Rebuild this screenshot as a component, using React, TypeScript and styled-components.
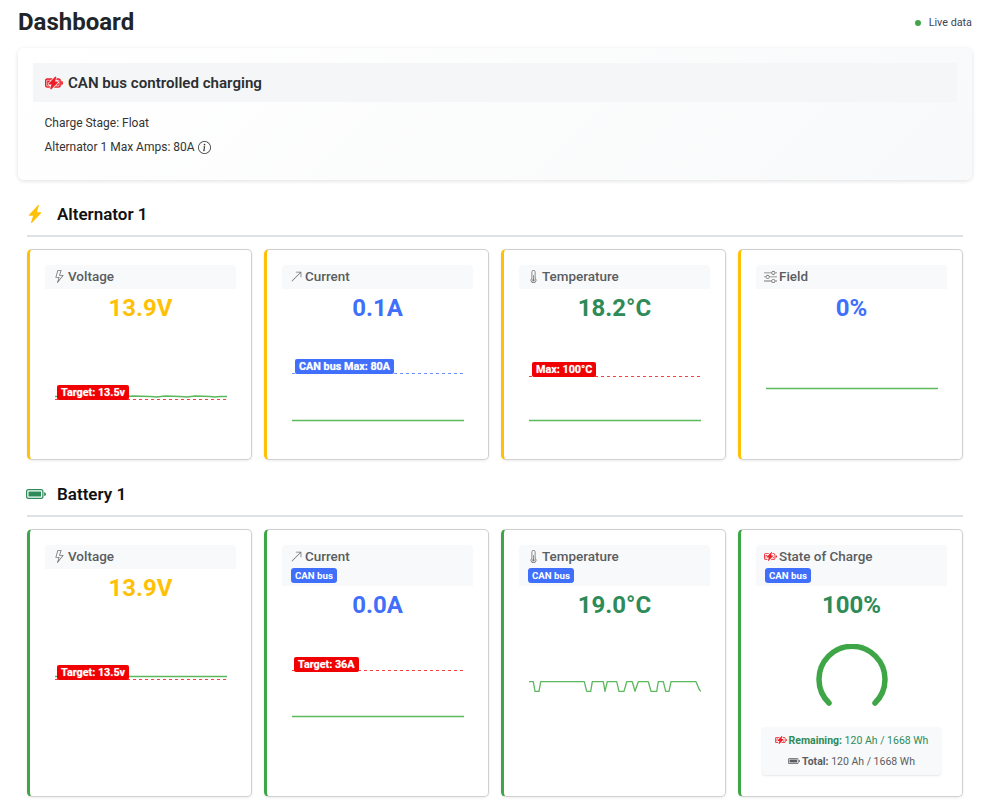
import type { ReactNode } from 'react';
import styled, { createGlobalStyle } from 'styled-components';
import {
  BsArrowUpRight,
  BsBatteryCharging,
  BsBatteryFull,
  BsInfoCircle,
  BsLightning,
  BsLightningChargeFill,
  BsSliders,
  BsThermometerHalf,
} from 'react-icons/bs';

const YELLOW = '#ffc107';
const BLUE = '#3f6ffb';
const SEA = '#2e8b57';
const GREEN = '#3fa648';
const RED = '#f00000';
const DANGER = '#ee1c25';
const LINE = '#5cb85c';

const GlobalStyle = createGlobalStyle`
  html, body {
    margin: 0;
    padding: 0;
    background: #fff;
    font-family: Roboto, "Liberation Sans", sans-serif;
    color: #212529;
  }
`;

const Page = styled.div`
  width: 988px;
  box-sizing: border-box;
  padding: 0 16px 5px 18px;
`;

const TopBar = styled.div`
  display: flex;
  align-items: center;
  justify-content: space-between;
  height: 44px;
  margin-bottom: 4px;
`;

const PageTitle = styled.h1`
  margin: 0;
  font-size: 24px;
  font-weight: 700;
  color: #212529;
`;

const LiveData = styled.div`
  display: flex;
  align-items: center;
  gap: 8px;
  font-size: 10.8px;
  color: #3b4458;
`;

const LiveDot = styled.span`
  width: 6px;
  height: 6px;
  margin-top: 1px;
  border-radius: 50%;
  background: ${GREEN};
`;

const Banner = styled.section`
  height: 132px;
  box-sizing: border-box;
  padding: 15px;
  border-radius: 6px;
  background: linear-gradient(135deg, #ffffff, #f8f9fa);
  box-shadow: 0 1px 4px rgba(0, 0, 0, 0.13);
`;

const BannerHead = styled.div`
  display: flex;
  align-items: center;
  gap: 5px;
  height: 39px;
  padding-left: 12px;
  background: #f5f6f7;
  font-size: 15.1px;
  font-weight: 600;
  color: #2b2f33;
`;

const BannerBody = styled.div`
  padding: 9px 0 0 11.5px;
  font-size: 12px;
  line-height: 24px;
  color: #333;

  svg {
    vertical-align: -2.5px;
    margin-left: 3px;
  }
`;

const Section = styled.section`
  padding: 0 9px;
`;

const SectionHead = styled.div`
  display: flex;
  align-items: center;
  height: 36px;
  padding: 1px 0 3px;
  margin-top: 15px;
  margin-bottom: 12px;
  border-bottom: 2px solid #dee2e6;
  font-size: 17px;
  font-weight: 600;
  color: #111;
`;

const SectionIcon = styled.span<{ $color: string; $size: number }>`
  display: flex;
  width: 30px;
  margin-left: -1px;
  margin-right: 1px;
  font-size: ${(p) => p.$size}px;
  color: ${(p) => p.$color};
`;

const CardGrid = styled.div`
  display: grid;
  grid-template-columns: repeat(4, 225px);
  gap: 12px;
`;

const Card = styled.article<{ $accent: string }>`
  box-sizing: border-box;
  padding: 15px;
  background: #fff;
  border: 1px solid #d0d0d0;
  border-left: 3px solid ${(p) => p.$accent};
  border-radius: 5px;
  box-shadow: 0 1px 3px rgba(0, 0, 0, 0.08);
`;

const CardTitle = styled.div`
  box-sizing: border-box;
  min-height: 24px;
  padding: 0 8px;
  background: #f8f9fa;
  border-radius: 4px 4px 0 0;
  font-size: 13.45px;
  font-weight: 500;
  color: #5a5d61;
`;

const TitleRow = styled.div`
  display: flex;
  align-items: center;
  gap: 2px;
  height: 23px;
`;

const TitleIcon = styled.span<{ $color?: string }>`
  display: flex;
  flex: none;
  color: ${(p) => p.$color ?? '#777'};
`;

const CanBadge = styled.span`
  display: block;
  width: fit-content;
  margin-left: 1px;
  padding: 0 4px;
  height: 15px;
  line-height: 15px;
  border-radius: 3px;
  background: ${BLUE};
  color: #fff;
  font-size: 9.7px;
  font-weight: 700;
`;

const CanBadgeSpacer = styled.div`
  height: 3px;
`;

const Value = styled.div<{ $color: string }>`
  height: 36px;
  line-height: 38px;
  text-align: center;
  font-size: 24px;
  font-weight: 700;
  color: ${(p) => p.$color};
`;

const ChartBox = styled.div`
  position: relative;
  height: 119px;

  svg {
    display: block;
  }
`;

const ChartLabel = styled.span<{ $bg: string }>`
  position: absolute;
  height: 15px;
  line-height: 15px;
  padding: 0 4px;
  border-radius: 2px;
  background: ${(p) => p.$bg};
  color: #fff;
  font-size: 10.8px;
  font-weight: 700;
  white-space: nowrap;
  text-shadow: 0 0 1px rgba(255, 255, 255, 0.6);
`;

const GaugeBox = styled.div`
  display: flex;
  justify-content: center;
  height: 105px;
  padding-top: 22px;
  box-sizing: border-box;

  svg {
    display: block;
  }
`;

const InfoBox = styled.div`
  margin: 0 6px 6px;
  height: 48px;
  box-sizing: border-box;
  padding-top: 3px;
  background: #f8f9fa;
  border-radius: 4px;
  box-shadow: 0 1px 2px rgba(0, 0, 0, 0.1);
  text-align: center;
  font-size: 10.5px;
  line-height: 21px;
`;

const InfoLine = styled.div<{ $color: string }>`
  color: ${(p) => p.$color};

  b {
    font-weight: 700;
  }

  svg {
    vertical-align: -2px;
    margin-right: 2px;
  }
`;

type Reference = {
  y: number;
  color: string;
  label: string;
  labelX: number;
  labelY: number;
};

const flat = (y: number) => `M10 ${y}H182`;

const voltageLine =
  'M10 71.5H52L60 71.5L75 72L88 71L105 71.5L112 72L120 71L135 71.5L142 72L150 71L165 71.5L170 72L175 71.5H182';

const wave =
  'M10 59.7H14.3L16 69.3H20L21.7 59.7H65.3L67.7 69.3H71.7L73.3 59.7H84.3L86 69.3L88.3 59.7H97.7L100 69.3H105L107.7 59.7H113.3L116 69.3L119.3 59.7H129.3L132 69.3H137.7L139.3 59.7H144.3L146.7 69.3H150L152 59.7H177L180 67L181.7 69.3';

const Chart = ({ path, reference }: { path: string; reference?: Reference }) => (
  <ChartBox>
    <svg width="191" height="119" viewBox="0 0 191 119" fill="none">
      {reference && (
        <line
          x1="10"
          x2="182"
          y1={reference.y}
          y2={reference.y}
          stroke={reference.color}
          strokeWidth="1"
          strokeDasharray="3 3"
          opacity="0.75"
        />
      )}
      <path d={path} stroke={LINE} strokeWidth="1.3" strokeLinejoin="round" />
    </svg>
    {reference && (
      <ChartLabel $bg={reference.color} style={{ left: reference.labelX, top: reference.labelY }}>
        {reference.label}
      </ChartLabel>
    )}
  </ChartBox>
);

const Gauge = () => (
  <GaugeBox>
    <svg width="72" height="62" viewBox="0 0 72 62" fill="none">
      <path d="M13 59A33 33 0 1 1 59 59" stroke={GREEN} strokeWidth="5.5" strokeLinecap="round" />
    </svg>
  </GaugeBox>
);

type MetricCardProps = {
  accent: string;
  icon: ReactNode;
  iconColor?: string;
  title: string;
  canBus?: boolean;
  value: string;
  valueColor: string;
  children: ReactNode;
};

const MetricCard = ({ accent, icon, iconColor, title, canBus, value, valueColor, children }: MetricCardProps) => (
  <Card $accent={accent}>
    <CardTitle>
      <TitleRow>
        <TitleIcon $color={iconColor}>{icon}</TitleIcon>
        {title}
      </TitleRow>
      {canBus && (
        <>
          <CanBadge>CAN bus</CanBadge>
          <CanBadgeSpacer />
        </>
      )}
    </CardTitle>
    <Value $color={valueColor}>{value}</Value>
    {children}
  </Card>
);

const targetVolt: Reference = {
  y: 74.5,
  color: RED,
  label: 'Target: 13.5v',
  labelX: 12,
  labelY: 60,
};

export default function App() {
  return (
    <>
      <GlobalStyle />
      <Page>
        <TopBar>
          <PageTitle>Dashboard</PageTitle>
          <LiveData>
            <LiveDot />
            Live data
          </LiveData>
        </TopBar>

        <Banner>
          <BannerHead>
            <BsBatteryCharging size={18} color={DANGER} stroke={DANGER} strokeWidth="0.4" />
            CAN bus controlled charging
          </BannerHead>
          <BannerBody>
            <div>Charge Stage: Float</div>
            <div>
              Alternator 1 Max Amps: 80A
              <BsInfoCircle size={13} />
            </div>
          </BannerBody>
        </Banner>

        <Section>
          <SectionHead>
            <SectionIcon $color={YELLOW} $size={18}>
              <BsLightningChargeFill />
            </SectionIcon>
            Alternator 1
          </SectionHead>
          <CardGrid>
            <MetricCard accent={YELLOW} icon={<BsLightning size={13} />} title="Voltage" value="13.9V" valueColor={YELLOW}>
              <Chart path={voltageLine} reference={targetVolt} />
            </MetricCard>
            <MetricCard accent={YELLOW} icon={<BsArrowUpRight size={13} />} title="Current" value="0.1A" valueColor={BLUE}>
              <Chart
                path={flat(95.5)}
                reference={{ y: 48.5, color: BLUE, label: 'CAN bus Max: 80A', labelX: 13, labelY: 34 }}
              />
            </MetricCard>
            <MetricCard accent={YELLOW} icon={<BsThermometerHalf size={13} />} title="Temperature" value="18.2°C" valueColor={SEA}>
              <Chart
                path={flat(95.5)}
                reference={{ y: 51.5, color: RED, label: 'Max: 100°C', labelX: 13, labelY: 37 }}
              />
            </MetricCard>
            <MetricCard accent={YELLOW} icon={<BsSliders size={13} />} title="Field" value="0%" valueColor={BLUE}>
              <Chart path={flat(63.5)} />
            </MetricCard>
          </CardGrid>
        </Section>

        <Section>
          <SectionHead>
            <SectionIcon $color={SEA} $size={20}>
              <BsBatteryFull />
            </SectionIcon>
            Battery 1
          </SectionHead>
          <CardGrid>
            <MetricCard accent={GREEN} icon={<BsLightning size={13} />} title="Voltage" value="13.9V" valueColor={YELLOW}>
              <Chart path={flat(71.5)} reference={targetVolt} />
            </MetricCard>
            <MetricCard accent={GREEN} icon={<BsArrowUpRight size={13} />} title="Current" canBus value="0.0A" valueColor={BLUE}>
              <Chart
                path={flat(94.5)}
                reference={{ y: 48.5, color: RED, label: 'Target: 36A', labelX: 12, labelY: 35 }}
              />
            </MetricCard>
            <MetricCard accent={GREEN} icon={<BsThermometerHalf size={13} />} title="Temperature" canBus value="19.0°C" valueColor={SEA}>
              <Chart path={wave} />
            </MetricCard>
            <MetricCard accent={GREEN} icon={<BsBatteryCharging size={13} />} iconColor={DANGER} title="State of Charge" canBus value="100%" valueColor={SEA}>
              <Gauge />
              <InfoBox>
                <InfoLine $color={SEA}>
                  <BsBatteryCharging size={12} color={DANGER} />
                  <b>Remaining:</b> 120 Ah / 1668 Wh
                </InfoLine>
                <InfoLine $color="#5a5d61">
                  <BsBatteryFull size={12} />
                  <b>Total:</b> 120 Ah / 1668 Wh
                </InfoLine>
              </InfoBox>
            </MetricCard>
          </CardGrid>
        </Section>
      </Page>
    </>
  );
}
